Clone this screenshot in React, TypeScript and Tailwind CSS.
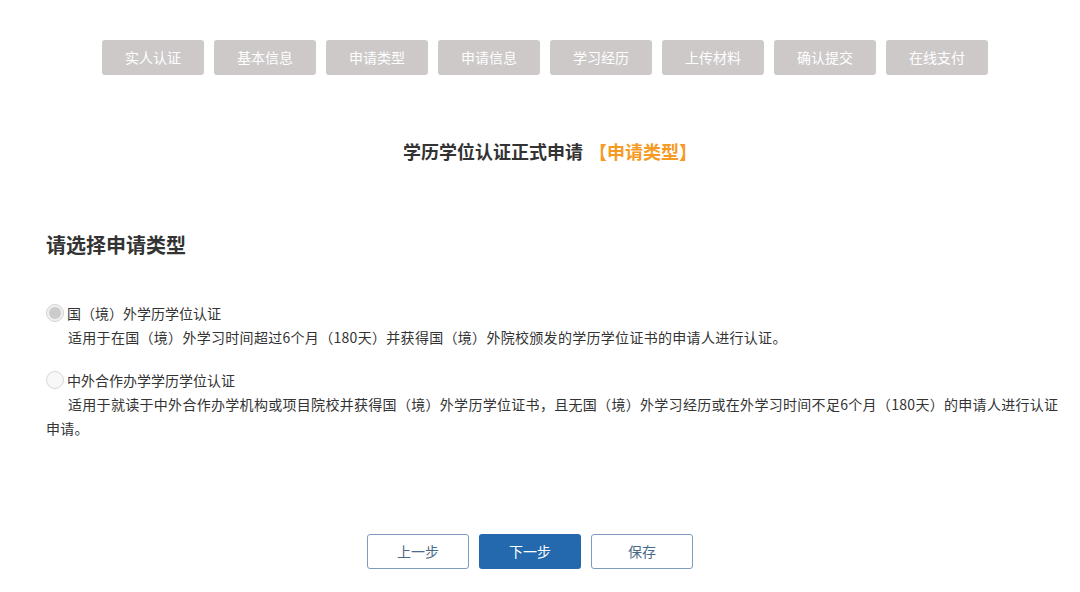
const STEPS = ['实人认证', '基本信息', '申请类型', '申请信息', '学习经历', '上传材料', '确认提交', '在线支付'];

const OPTIONS = [
  {
    title: '国（境）外学历学位认证',
    desc: '适用于在国（境）外学习时间超过6个月（180天）并获得国（境）外院校颁发的学历学位证书的申请人进行认证。',
    checked: true,
  },
  {
    title: '中外合作办学学历学位认证',
    desc: '适用于就读于中外合作办学机构或项目院校并获得国（境）外学历学位证书，且无国（境）外学习经历或在外学习时间不足6个月（180天）的申请人进行认证申请。',
    checked: false,
  },
];

function Radio({ checked }: { checked: boolean }) {
  return checked ? (
    <span className="w-[18px] h-[18px] min-w-[18px] rounded-full border border-[#d4d4d4] bg-[#f0f0f0] flex items-center justify-center">
      <span className="w-[12px] h-[12px] rounded-full bg-[#cbcbcb]" />
    </span>
  ) : (
    <span className="w-[18px] h-[18px] min-w-[18px] rounded-full border border-[#d8d8d8] bg-[#f8f8f8]" />
  );
}

export default function App() {
  return (
    <div
      className="w-[1080px] h-[592px] bg-white text-[#333] overflow-hidden"
      style={{ fontFamily: '"Microsoft YaHei", "Noto Sans CJK SC", "Noto Sans", sans-serif' }}
    >
      {/* steps */}
      <div className="flex justify-center gap-[10px] pt-[40px] pl-[10px]">
        {STEPS.map(s => (
          <div
            key={s}
            className="w-[102px] h-[35px] rounded-[3px] bg-[#cdc9c9] text-white text-[14px] flex items-center justify-center"
          >
            {s}
          </div>
        ))}
      </div>

      <h1 className="mt-[63px] text-center text-[18px] font-bold leading-[26px] pl-[20px]">
        学历学位认证正式申请<span className="ml-[6px] text-[#f59a23]">【申请类型】</span>
      </h1>

      <div className="pl-[46px] pr-[18px]">
        <h2 className="mt-[67px] text-[20px] font-bold leading-[28px]">请选择申请类型</h2>

        <div className="mt-[43px] flex flex-col gap-[20px]">
          {OPTIONS.map(o => (
            <div key={o.title}>
              <div className="flex items-center h-[22px] text-[14px]">
                <Radio checked={o.checked} />
                <span className="ml-[3px]">{o.title}</span>
              </div>
              <p className="text-[14px] leading-[24px] indent-[22px] mt-[1px] tracking-[0.3px]">{o.desc}</p>
            </div>
          ))}
        </div>
      </div>

      <div className="mt-[94px] flex justify-center gap-[10px] pr-[20px]">
        <button className="w-[102px] h-[35px] rounded-[3px] border border-[#7f9cbc] bg-white text-[#4a6889] text-[14px]">
          上一步
        </button>
        <button className="w-[102px] h-[35px] rounded-[3px] bg-[#2468ad] text-white text-[14px]">
          下一步
        </button>
        <button className="w-[102px] h-[35px] rounded-[3px] border border-[#7f9cbc] bg-white text-[#4a6889] text-[14px]">
          保存
        </button>
      </div>
    </div>
  );
}
